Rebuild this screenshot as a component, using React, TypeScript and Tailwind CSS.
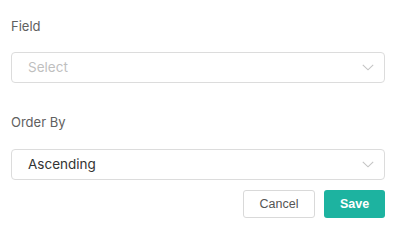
import React from "react";

function Chevron() {
  return (
    <svg width="12" height="7" viewBox="0 0 12 7" fill="none">
      <path d="M0.8 0.8l5.2 5L11.2 0.8" stroke="#c4c4c4" strokeWidth="1.1" />
    </svg>
  );
}

export default function App() {
  return (
    <div className="w-[396px] h-[238px] bg-white px-[11px] pt-[18px] font-['Inter',sans-serif]">
      <div className="text-[13px] leading-[16px] text-[#606060]">Field</div>
      <div className="mt-[18px] h-[31px] border border-[#dcdcdc] rounded-[4px] pl-[16px] pr-[10px] flex items-center justify-between">
        <span className="text-[13.5px] text-[#bfbfbf]">Select</span>
        <Chevron />
      </div>
      <div className="mt-[31px] text-[13px] leading-[16px] text-[#606060]">Order By</div>
      <div className="mt-[19px] h-[31px] border border-[#dcdcdc] rounded-[4px] pl-[16px] pr-[10px] flex items-center justify-between">
        <span className="text-[13.5px] text-[#333333]">Ascending</span>
        <Chevron />
      </div>
      <div className="mt-[10px] flex justify-end gap-[9px]">
        <button className="w-[72px] h-[28px] border border-[#d9d9d9] rounded-[3px] bg-white text-[12.5px] text-[#555555] font-['Liberation_Sans',sans-serif]">
          Cancel
        </button>
        <button className="w-[61px] h-[28px] rounded-[3px] bg-[#1db3a0] text-[12.5px] font-bold text-white font-['Liberation_Sans',sans-serif]">
          Save
        </button>
      </div>
    </div>
  );
}
